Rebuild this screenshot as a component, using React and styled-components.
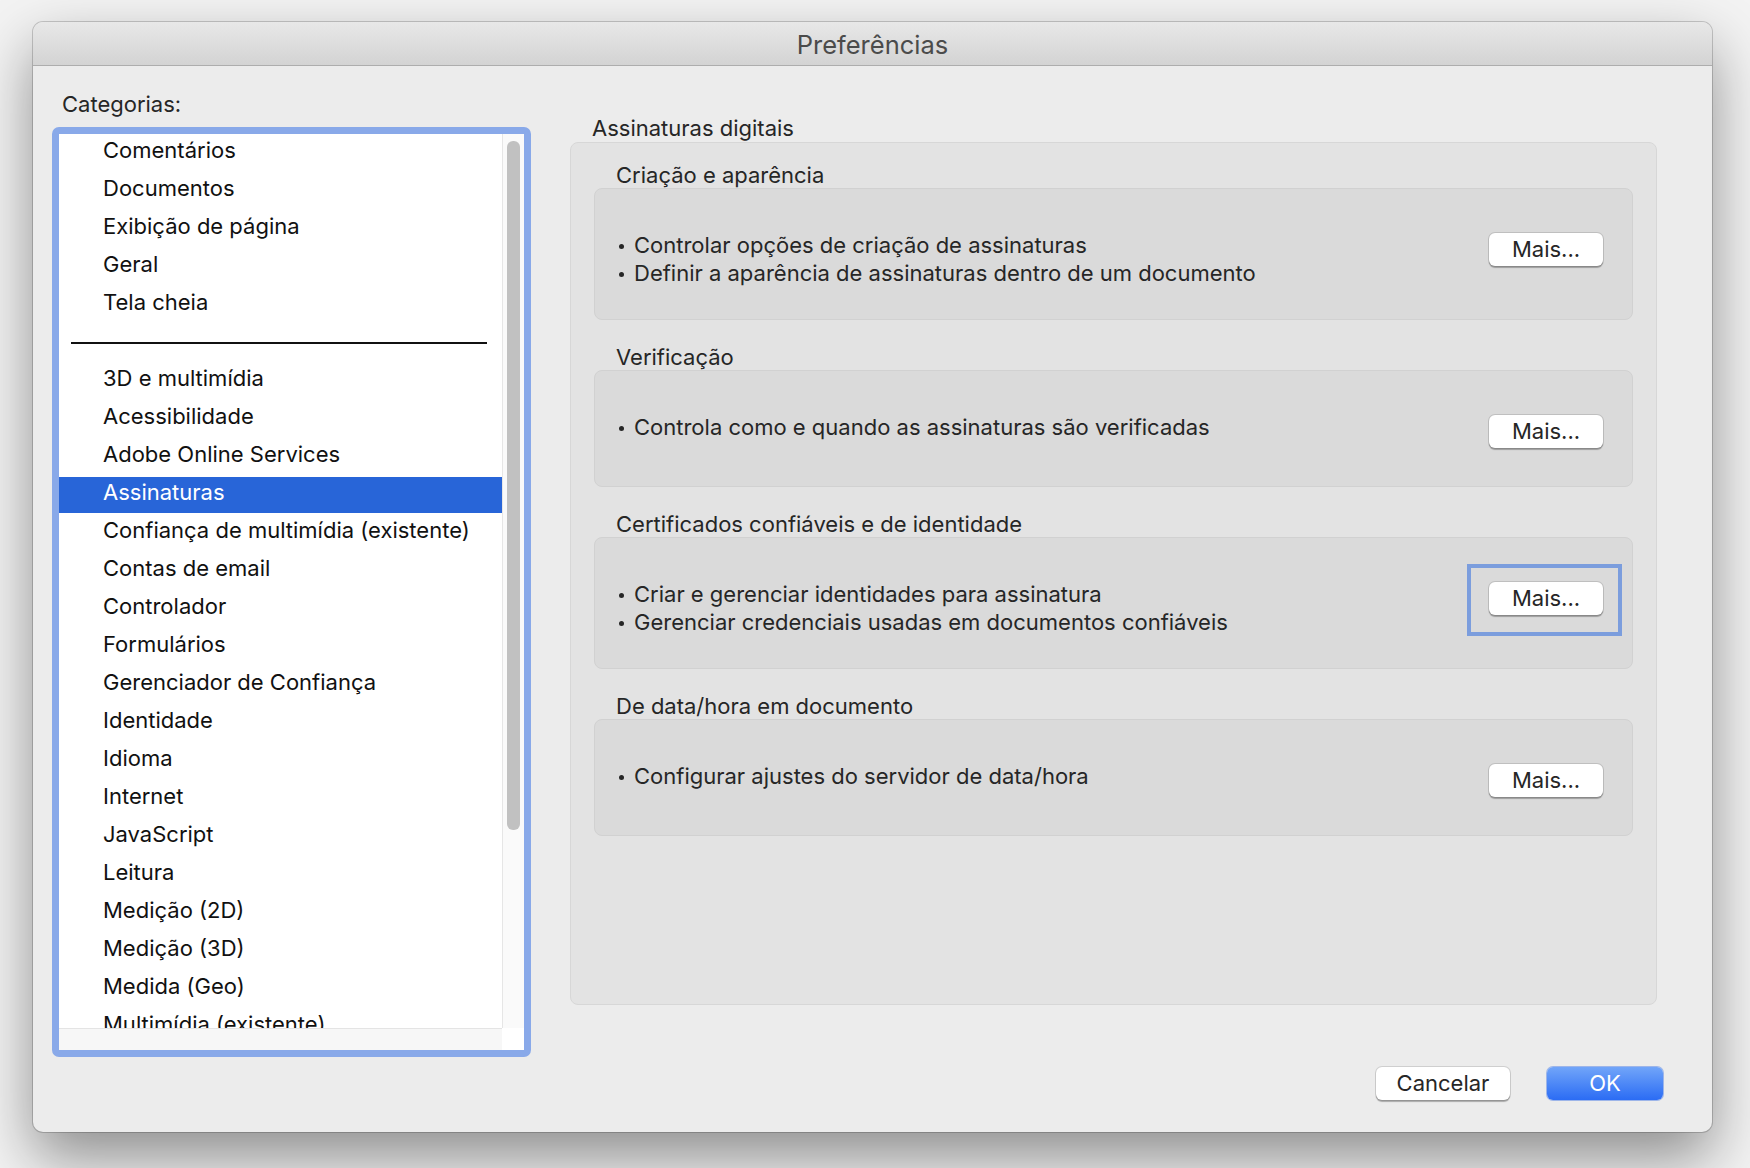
import React from 'react'
import styled, { createGlobalStyle } from 'styled-components'

const GlobalStyle = createGlobalStyle`
  html, body {
    margin: 0;
    padding: 0;
    background: #f3f3f3;
  }
  body {
    font-family: Inter, "Noto Sans", "Liberation Sans", sans-serif;
    -webkit-font-smoothing: antialiased;
  }
`

const Page = styled.div`
  width: 1750px;
  height: 1168px;
  box-sizing: border-box;
  padding: 22px 0 0 33px;
  overflow: hidden;
`

const Window = styled.div`
  width: 1679px;
  height: 1110px;
  background: #ececec;
  border-radius: 10px;
  box-shadow: 0 0 0 1px rgba(0, 0, 0, 0.18), 0 26px 60px rgba(0, 0, 0, 0.42);
  display: flex;
  flex-direction: column;
  overflow: hidden;
`

const TitleBar = styled.div`
  height: 44px;
  box-sizing: border-box;
  padding-top: 2px;
  flex: none;
  background: linear-gradient(#e8e8e8, #d3d3d3);
  border-bottom: 1px solid #adadad;
  display: flex;
  align-items: center;
  justify-content: center;
  font-size: 25.5px;
  color: #4b4b4b;
`

const Body = styled.div`
  display: flex;
  gap: 39px;
  padding-left: 19px;
  height: 991px;
`

const LeftCol = styled.div`
  width: 479px;
  display: flex;
  flex-direction: column;
  padding-top: 25px;
`

const Label = styled.div`
  font-size: 22px;
  line-height: 26px;
  color: #262626;
  padding-left: ${p => p.indent || 0}px;
  margin-bottom: ${p => p.gap || 0}px;
`

const ListFrame = styled.div`
  flex: 1;
  border: 7px solid #89a9e9;
  border-radius: 7px;
  background: #fff;
  display: grid;
  grid-template-columns: 1fr 22px;
  grid-template-rows: 1fr 22px;
  overflow: hidden;
`

const Viewport = styled.div`
  overflow: hidden;
  display: flex;
  flex-direction: column;
`

const Item = styled.div`
  flex: none;
  height: 36px;
  margin: 1px 0;
  box-sizing: border-box;
  padding: 1px 0 0 44px;
  font-size: 22px;
  line-height: 28px;
  white-space: nowrap;
  color: ${p => (p.selected ? '#fff' : '#111')};
  background: ${p => (p.selected ? '#2865d8' : 'transparent')};
`

const Separator = styled.div`
  flex: none;
  height: 38px;
  display: flex;
  align-items: center;
  padding: 0 15px 0 12px;
  &::before {
    content: '';
    flex: 1;
    height: 2px;
    background: #111;
  }
`

const VTrack = styled.div`
  border-left: 1px solid #e6e6e6;
  background: #fafafa;
  padding: 7px 4px 0 4px;
`

const Thumb = styled.div`
  height: 689px;
  border-radius: 6px;
  background: #c1c1c1;
`

const HTrack = styled.div`
  border-top: 1px solid #e4e4e4;
  background: #f7f7f7;
`

const Corner = styled.div`
  background: #fff;
`

const RightCol = styled.div`
  width: 1087px;
  padding-top: 49px;
  display: flex;
  flex-direction: column;
`

const Group = styled.div`
  height: 863px;
  box-sizing: border-box;
  background: #e3e3e3;
  border: 1px solid #d7d7d7;
  border-radius: 8px;
  padding: 19px 23px 0 23px;
  display: flex;
  flex-direction: column;
  gap: 24px;
`

const Section = styled.div`
  display: flex;
  flex-direction: column;
`

const SectionTitle = styled.div`
  font-size: 22px;
  line-height: 26px;
  color: #262626;
  padding-left: 22px;
`

const Box = styled.div`
  min-height: 117px;
  box-sizing: border-box;
  background: #dadada;
  border: 1px solid #d1d1d1;
  border-radius: 8px;
  padding: 42px 29px 32px 24px;
  display: flex;
  align-items: flex-start;
  justify-content: space-between;
`

const Bullets = styled.ul`
  list-style: none;
  margin: 0;
  padding: 0;
`

const Bullet = styled.li`
  font-size: 22px;
  line-height: 28px;
  color: #262626;
  white-space: nowrap;
  &::before {
    content: '';
    display: inline-block;
    width: 5px;
    height: 5px;
    border-radius: 50%;
    background: #262626;
    margin-right: 10px;
    vertical-align: 4px;
  }
`

const ButtonSlot = styled.div`
  position: relative;
  margin-top: 2px;
  ${p =>
    p.focused &&
    `
    &::after {
      content: '';
      position: absolute;
      top: -18px;
      bottom: -21px;
      left: -22px;
      right: -19px;
      border: 4px solid #7b9ddd;
      pointer-events: none;
    }
  `}
`

const Button = styled.button`
  width: ${p => p.w || 114}px;
  height: 33px;
  border: none;
  border-radius: 6px;
  font-family: inherit;
  font-size: 22px;
  line-height: 33px;
  padding: 0;
  color: ${p => (p.primary ? '#fff' : '#262626')};
  background: ${p =>
    p.primary ? 'linear-gradient(#71a5f9, #2b6cf4)' : '#fff'};
  box-shadow: ${p =>
    p.primary
      ? '0 0 0 1px rgba(40, 100, 230, 0.4)'
      : '0 0 0 1px rgba(0, 0, 0, 0.12), 0 1.5px 1px rgba(0, 0, 0, 0.28)'};
`

const Footer = styled.div`
  display: flex;
  justify-content: flex-end;
  gap: 37px;
  padding: 10px 49px 0 0;
`

const topItems = ['Comentários', 'Documentos', 'Exibição de página', 'Geral', 'Tela cheia']

const otherItems = [
  '3D e multimídia',
  'Acessibilidade',
  'Adobe Online Services',
  'Assinaturas',
  'Confiança de multimídia (existente)',
  'Contas de email',
  'Controlador',
  'Formulários',
  'Gerenciador de Confiança',
  'Identidade',
  'Idioma',
  'Internet',
  'JavaScript',
  'Leitura',
  'Medição (2D)',
  'Medição (3D)',
  'Medida (Geo)',
  'Multimídia (existente)',
]

const sections = [
  {
    title: 'Criação e aparência',
    lines: [
      'Controlar opções de criação de assinaturas',
      'Definir a aparência de assinaturas dentro de um documento',
    ],
  },
  {
    title: 'Verificação',
    lines: ['Controla como e quando as assinaturas são verificadas'],
  },
  {
    title: 'Certificados confiáveis e de identidade',
    lines: [
      'Criar e gerenciar identidades para assinatura',
      'Gerenciar credenciais usadas em documentos confiáveis',
    ],
    focused: true,
  },
  {
    title: 'De data/hora em documento',
    lines: ['Configurar ajustes do servidor de data/hora'],
  },
]

const App = () => {
  return (
    <Page>
      <GlobalStyle />
      <Window>
        <TitleBar>Preferências</TitleBar>
        <Body>
          <LeftCol>
            <Label indent={10} gap={10}>Categorias:</Label>
            <ListFrame>
              <Viewport>
                {topItems.map(item => (
                  <Item key={item}>{item}</Item>
                ))}
                <Separator />
                {otherItems.map(item => (
                  <Item key={item} selected={item === 'Assinaturas'}>
                    {item}
                  </Item>
                ))}
              </Viewport>
              <VTrack>
                <Thumb />
              </VTrack>
              <HTrack />
              <Corner />
            </ListFrame>
          </LeftCol>
          <RightCol>
            <Label indent={22} gap={1}>Assinaturas digitais</Label>
            <Group>
              {sections.map(section => (
                <Section key={section.title}>
                  <SectionTitle>{section.title}</SectionTitle>
                  <Box>
                    <Bullets>
                      {section.lines.map(line => (
                        <Bullet key={line}>{line}</Bullet>
                      ))}
                    </Bullets>
                    <ButtonSlot focused={section.focused}>
                      <Button>Mais...</Button>
                    </ButtonSlot>
                  </Box>
                </Section>
              ))}
            </Group>
          </RightCol>
        </Body>
        <Footer>
          <Button w={134}>Cancelar</Button>
          <Button w={116} primary>
            OK
          </Button>
        </Footer>
      </Window>
    </Page>
  )
}

export default App
